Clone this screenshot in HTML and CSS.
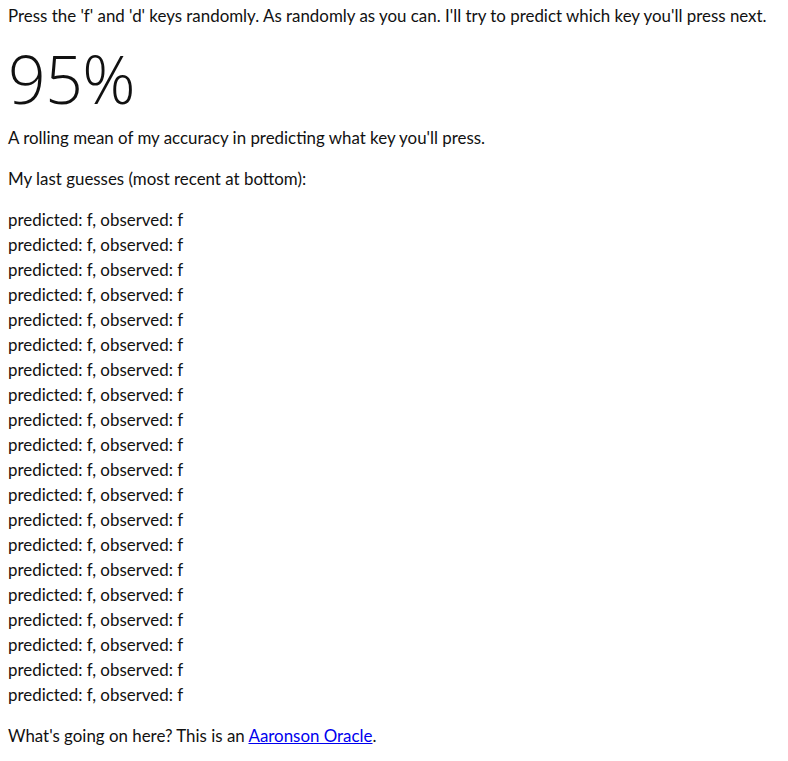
FILE: index.html
```html
<!DOCTYPE html>
<html lang="en">
<head>
<meta charset="utf-8">
<title>Aaronson Oracle</title>
<link rel="stylesheet" href="styles.css">
</head>
<body>
<main class="page">
  <p class="text intro">Press the 'f' and 'd' keys randomly. As randomly as you can. I'll try to predict which key you'll press next.</p>
  <div class="score">95%</div>
  <p class="text">A rolling mean of my accuracy in predicting what key you'll press.</p>
  <p class="text">My last guesses (most recent at bottom):</p>
  <div class="log text">
    <div>predicted: f, observed: f</div>
    <div>predicted: f, observed: f</div>
    <div>predicted: f, observed: f</div>
    <div>predicted: f, observed: f</div>
    <div>predicted: f, observed: f</div>
    <div>predicted: f, observed: f</div>
    <div>predicted: f, observed: f</div>
    <div>predicted: f, observed: f</div>
    <div>predicted: f, observed: f</div>
    <div>predicted: f, observed: f</div>
    <div>predicted: f, observed: f</div>
    <div>predicted: f, observed: f</div>
    <div>predicted: f, observed: f</div>
    <div>predicted: f, observed: f</div>
    <div>predicted: f, observed: f</div>
    <div>predicted: f, observed: f</div>
    <div>predicted: f, observed: f</div>
    <div>predicted: f, observed: f</div>
    <div>predicted: f, observed: f</div>
    <div>predicted: f, observed: f</div>
  </div>
  <p class="text">What's going on here? This is an <a class="link" href="#">Aaronson Oracle</a>.</p>
</main>
</body>
</html>
```

FILE: styles.css
```css
html, body {
  margin: 0;
  padding: 0;
  background: #ffffff;
}

.page {
  padding: 3px 8px 0 8px;
  font-family: "Lato", "Open Sans", sans-serif;
  font-size: 16.9px;
  line-height: 25px;
  color: #111111;
}

.text {
  margin: 0 0 16px 0;
}

.intro {
  margin-bottom: 9px;
}

.score {
  font-family: "Open Sans", "Lato", sans-serif;
  font-size: 66px;
  font-weight: 300;
  line-height: 82px;
  letter-spacing: -0.5px;
  margin-bottom: 6px;
}

.log {
  margin-bottom: 16px;
}

.link {
  color: #0000ee;
  text-decoration: underline;
}
```
